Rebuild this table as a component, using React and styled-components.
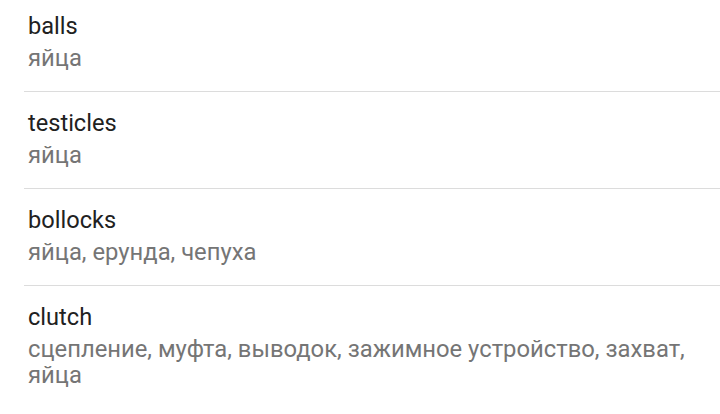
import React from "react";
import styled, { createGlobalStyle } from "styled-components";

const entries = [
  { word: "balls", translation: "яйца" },
  { word: "testicles", translation: "яйца" },
  { word: "bollocks", translation: "яйца, ерунда, чепуха" },
  {
    word: "clutch",
    translation:
      "сцепление, муфта, выводок, зажимное устройство, захват, яйца",
  },
];

const App = () => {
  return (
    <>
      <GlobalStyle />
      <List>
        {entries.map((entry) => (
          <Item key={entry.word}>
            <Word>{entry.word}</Word>
            <Translation>{entry.translation}</Translation>
          </Item>
        ))}
      </List>
    </>
  );
};

const GlobalStyle = createGlobalStyle`
  body {
    margin: 0;
    background: #ffffff;
    font-family: Roboto, "Noto Sans", sans-serif;
    overflow: hidden;
  }
`;

const List = styled.ul`
  list-style: none;
  margin: -5px 0 0 0;
  padding: 0 0 0 24px;
`;

const Item = styled.li`
  padding: 16px 24px 20px 4px;
  border-bottom: 1px solid #dcdcdc;

  &:last-child {
    border-bottom: none;
  }
`;

const Word = styled.div`
  font-size: 23.6px;
  line-height: 30px;
  margin-bottom: 4px;
  color: #212121;
`;

const Translation = styled.div`
  font-size: 23.8px;
  line-height: 26px;
  color: #757575;
`;

export default App;
